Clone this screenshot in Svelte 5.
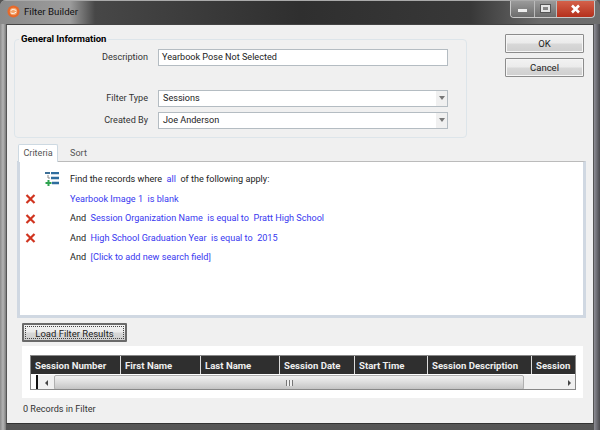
<script>
    const columns = [
        { title: "Session Number", width: 90 },
        { title: "First Name", width: 80 },
        { title: "Last Name", width: 79 },
        { title: "Session Date", width: 75 },
        { title: "Start Time", width: 73 },
        { title: "Session Description", width: 104 },
        { title: "Session", width: 45 },
    ];

    const rules = [
        { prefix: "", parts: ["Yearbook Image 1", "is blank"] },
        { prefix: "And", parts: ["Session Organization Name", "is equal to", "Pratt High School"] },
        { prefix: "And", parts: ["High School Graduation Year", "is equal to", "2015"] },
    ];
</script>

<div class="window">
    <header class="titlebar">
        <svg class="app-icon" width="13" height="13" viewBox="0 0 14 14">
            <circle cx="7" cy="7" r="6.500" fill="#e8692a" />
            <circle cx="7" cy="7" r="4" fill="#f2a36b" />
            <path d="M4 6c2-2 4-1 6 0M4 8.500c2 1 4 1 6-1" stroke="#fff" fill="none" />
        </svg>
        <span class="title">Filter Builder</span>
        <div class="controls">
            <div class="ctl min"><span></span></div>
            <div class="ctl max"><span></span></div>
            <div class="ctl close">
                <svg width="11" height="10" viewBox="0 0 11 10">
                    <path d="M2 1.500l7 7M9 1.500l-7 7" stroke="#fff" stroke-width="2.600" />
                </svg>
            </div>
        </div>
    </header>

    <div class="client">
        <div class="top">
            <fieldset class="group">
                <legend>General Information</legend>
                <div class="field">
                    <span class="label">Description</span>
                    <div class="input">Yearbook Pose Not Selected</div>
                </div>
                <div class="field type">
                    <span class="label">Filter Type</span>
                    <div class="input combo">Sessions<span class="drop"><i></i></span></div>
                </div>
                <div class="field by">
                    <span class="label">Created By</span>
                    <div class="input combo">Joe Anderson<span class="drop"><i></i></span></div>
                </div>
            </fieldset>
            <div class="actions">
                <button>OK</button>
                <button>Cancel</button>
            </div>
        </div>

        <div class="tabs">
            <div class="tab active">Criteria</div>
            <div class="tab">Sort</div>
        </div>
        <div class="panel">
            <div class="row head">
                <svg class="mark" width="14" height="14" viewBox="0 0 14 14">
                    <path d="M0 1h5" stroke="#3d6f96" stroke-width="2" />
                    <path d="M6 1h8M6 6h8M7 11h7" stroke="#2f6d9e" stroke-width="2.400" />
                    <path d="M3 3v3h2" stroke="#888" fill="none" />
                    <path d="M3.500 8v6M0.500 11h6" stroke="#2ea34f" stroke-width="2" />
                </svg>
                <span class="text">Find the records where</span>
                <span class="link">all</span>
                <span class="text">of the following apply:</span>
            </div>
            {#each rules as rule}
                <div class="row">
                    <svg class="del" width="11" height="10" viewBox="0 0 11 10">
                        <path d="M1.500 1l8 8M9.500 1l-8 8" stroke="#d0341f" stroke-width="2.200" />
                    </svg>
                    {#if rule.prefix}<span class="text">{rule.prefix}</span>{/if}
                    {#each rule.parts as part}
                        <span class="link">{part}</span>
                    {/each}
                </div>
            {/each}
            <div class="row plain">
                <span class="text">And</span>
                <span class="link">[Click to add new search field]</span>
            </div>
        </div>

        <button class="load"><span>Load Filter Results</span></button>

        <div class="results">
            <div class="grid">
                <div class="grid-head">
                    {#each columns as col}
                        <div class="col" style={`width: ${col.width}px`}>{col.title}</div>
                    {/each}
                </div>
                <div class="scroll">
                    <div class="corner"></div>
                    <div class="arrow"><i class="left"></i></div>
                    <div class="thumb"><span class="grip"></span></div>
                    <div class="arrow end"><i class="right"></i></div>
                </div>
            </div>
        </div>

        <div class="status">0 Records in Filter</div>
    </div>
</div>

<style>
    :global(body) {
        margin: 0;
        background: #555;
    }

    .window {
        width: 600px;
        height: 430px;
        box-sizing: border-box;
        padding: 0 6px 6px;
        display: flex;
        flex-direction: column;
        overflow: hidden;
        border-radius: 6px 6px 0 0;
        font-family: Roboto, "Liberation Sans", sans-serif;
        font-size: 9.100px;
        color: #222;
        background:
            linear-gradient(90deg, #8a8a8a 0, #b5b5b5 3px, #7c7c7c 6px, transparent 6px, transparent 594px, #8d8d95 594px, #4a4a4e 600px),
            linear-gradient(#777, #555);
    }

    .titlebar {
        height: 24px;
        flex: none;
        margin: 0 -6px;
        padding-left: 7px;
        display: flex;
        align-items: center;
        gap: 4px;
        border-top: 1px solid #aaa;
        box-sizing: border-box;
        background: linear-gradient(90deg, #8a8a8a 0, #9c9c9c 70px, #474747 95px, #2f2f2f 300px, #383838 470px, #6a6a6a 540px, #6e6e6e 600px);
    }

    .title {
        font-size: 9.700px;
        color: #111;
        margin-top: -2px;
    }

    .app-icon {
        margin-top: -2px;
    }

    .controls {
        margin-left: auto;
        margin-right: 5px;
        margin-top: -7px;
        height: 16px;
        display: flex;
        border: 1px solid #c8c8c8;
        border-top: none;
        border-radius: 0 0 4px 4px;
    }

    .ctl {
        height: 16px;
        display: flex;
        align-items: center;
        justify-content: center;
        background: linear-gradient(#9a9a9a, #6c6c6c);
    }

    .min {
        width: 23px;
        border-right: 1px solid #bbb;
        border-radius: 0 0 0 4px;
    }

    .min span {
        width: 9px;
        height: 3px;
        background: #eee;
        margin-top: 3px;
    }

    .max {
        width: 21px;
        border-right: 1px solid #bbb;
    }

    .max span {
        width: 5px;
        height: 3px;
        border: 2px solid #e4e4e4;
        outline: 1px solid #555;
    }

    .close {
        width: 37px;
        background: linear-gradient(#d4614a, #b5301c);
        border-radius: 0 0 4px 0;
    }

    .client {
        flex: 1;
        min-height: 0;
        background: #f0f0f0;
        border: 1px solid #555;
        border-bottom-color: #333;
        border-top-color: #444;
        display: flex;
        flex-direction: column;
        padding: 0 8px 0 10px;
    }

    .top {
        display: flex;
        justify-content: space-between;
        align-items: flex-start;
    }

    .group {
        width: 453px;
        height: 105px;
        box-sizing: border-box;
        margin: 8px 0 0 -3px;
        padding: 0;
        border: 1px solid #dde5ea;
        border-radius: 4px;
        display: flex;
        flex-direction: column;
    }

    legend {
        font-weight: bold;
        font-size: 9.500px;
        color: #000;
        padding: 0 2px 0 2px;
        margin-left: 4px;
        line-height: 12px;
    }

    .field {
        display: flex;
        align-items: center;
        margin-top: 3px;
        height: 18px;
    }

    .field.type {
        margin-top: 23px;
    }

    .field.by {
        margin-top: 4px;
    }

    .label {
        width: 133px;
        text-align: right;
        margin-right: 10px;
        color: #333;
    }

    .input {
        width: 290px;
        height: 17px;
        box-sizing: border-box;
        border: 1px solid #b4bcc2;
        background: #fff;
        padding-left: 3px;
        line-height: 14px;
        position: relative;
    }

    .combo {
        height: 17px;
        padding-left: 4px;
    }

    .drop {
        position: absolute;
        right: 0;
        top: 0;
        bottom: 0;
        width: 11px;
        background: #f0f0f0;
        display: flex;
        align-items: center;
        justify-content: center;
    }

    .drop i {
        border: 3px solid transparent;
        border-top: 4px solid #777;
        border-bottom: none;
    }

    .actions {
        margin: 9px 1px 0 0;
        display: flex;
        flex-direction: column;
        gap: 5px;
    }

    button {
        width: 79px;
        height: 19px;
        padding: 0;
        font: inherit;
        font-size: 9.500px;
        color: #222;
        border: 1px solid #8c8c8c;
        border-radius: 1px;
        box-shadow: inset 0 0 0 1px #f6f6f6;
        background: linear-gradient(#f2f2f2 0, #ebebeb 48%, #d8d8d8 52%, #cfcfcf 100%);
    }

    .tabs {
        display: flex;
        margin-top: 6px;
        padding-left: 1px;
        height: 18px;
        position: relative;
        z-index: 1;
    }

    .tab {
        height: 18px;
        line-height: 18px;
        color: #555;
        margin-left: 12px;
    }

    .tab.active {
        margin: 0;
        width: 40px;
        box-sizing: border-box;
        background: #fff;
        border: 1px solid #cdd9e2;
        border-bottom: none;
        border-radius: 2px 2px 0 0;
        line-height: 17px;
        text-align: center;
    }

    .panel {
        margin: -1px -1px 0 0;
        height: 157px;
        box-sizing: border-box;
        background: #fff;
        border: 1px solid #d0d8e2;
        border-width: 1px 3px 3px 3px;
        border-top: 1px solid #bbb;
        padding: 7.500px 0 0 0;
    }

    .row {
        display: flex;
        align-items: center;
        height: 19.500px;
        padding-left: 50px;
        gap: 4.500px;
        position: relative;
    }

    .row .del {
        position: absolute;
        left: 5px;
        top: 5px;
    }

    .head .mark {
        position: absolute;
        left: 25px;
        top: 2px;
    }

    .text {
        color: #222;
    }

    .link {
        color: #3838f0;
    }

    .load {
        width: 105px;
        margin: 5px 0 0 5px;
        flex: none;
        border: 2px solid #6a6a6a;
        box-shadow: none;
        padding: 1px;
        display: flex;
    }

    .load span {
        flex: 1;
        border: 1px dotted #444;
        line-height: 13px;
    }

    .results {
        background: #fff;
        margin: 4px 2px 0 5px;
        height: 52px;
        padding: 9px 8px 0;
        box-sizing: border-box;
        flex: none;
    }

    .grid {
        width: 546px;
        height: 35px;
        box-sizing: border-box;
        border: 1px solid #888;
        overflow: hidden;
    }

    .grid-head {
        display: flex;
        height: 18px;
        background: #2f2f2f;
    }

    .col {
        flex: none;
        box-sizing: border-box;
        padding-left: 4px;
        border-right: 1px solid #ddd;
        color: #eee;
        font-weight: bold;
        font-size: 9.600px;
        line-height: 20px;
        white-space: nowrap;
        overflow: hidden;
    }

    .scroll {
        display: flex;
        height: 15px;
        margin-top: 1px;
        background: #f0f0f0;
    }

    .corner {
        width: 4px;
        border-left: 1px solid #fff;
        border-right: 2px solid #111;
        background: #fff;
    }

    .arrow {
        width: 16px;
        display: flex;
        align-items: center;
        justify-content: center;
    }

    .arrow.end {
        flex: 1;
        justify-content: flex-end;
        padding-right: 4px;
    }

    .arrow i {
        border: 3px solid transparent;
    }

    .arrow .left {
        border-right: 3px solid #444;
        border-left: none;
    }

    .arrow .right {
        border-left: 3px solid #444;
        border-right: none;
    }

    .thumb {
        width: 470px;
        box-sizing: border-box;
        border: 1px solid #b0b0b0;
        border-radius: 2px;
        background: linear-gradient(#f0f0f0, #dcdcdc 50%, #c4c4c4);
        display: flex;
        align-items: center;
        justify-content: center;
    }

    .grip {
        width: 7px;
        height: 6px;
        background: repeating-linear-gradient(90deg, #777 0 1px, #eee 1px 3px);
    }

    .status {
        margin: 5px 0 0 6px;
        line-height: 13px;
        color: #333;
    }
</style>
